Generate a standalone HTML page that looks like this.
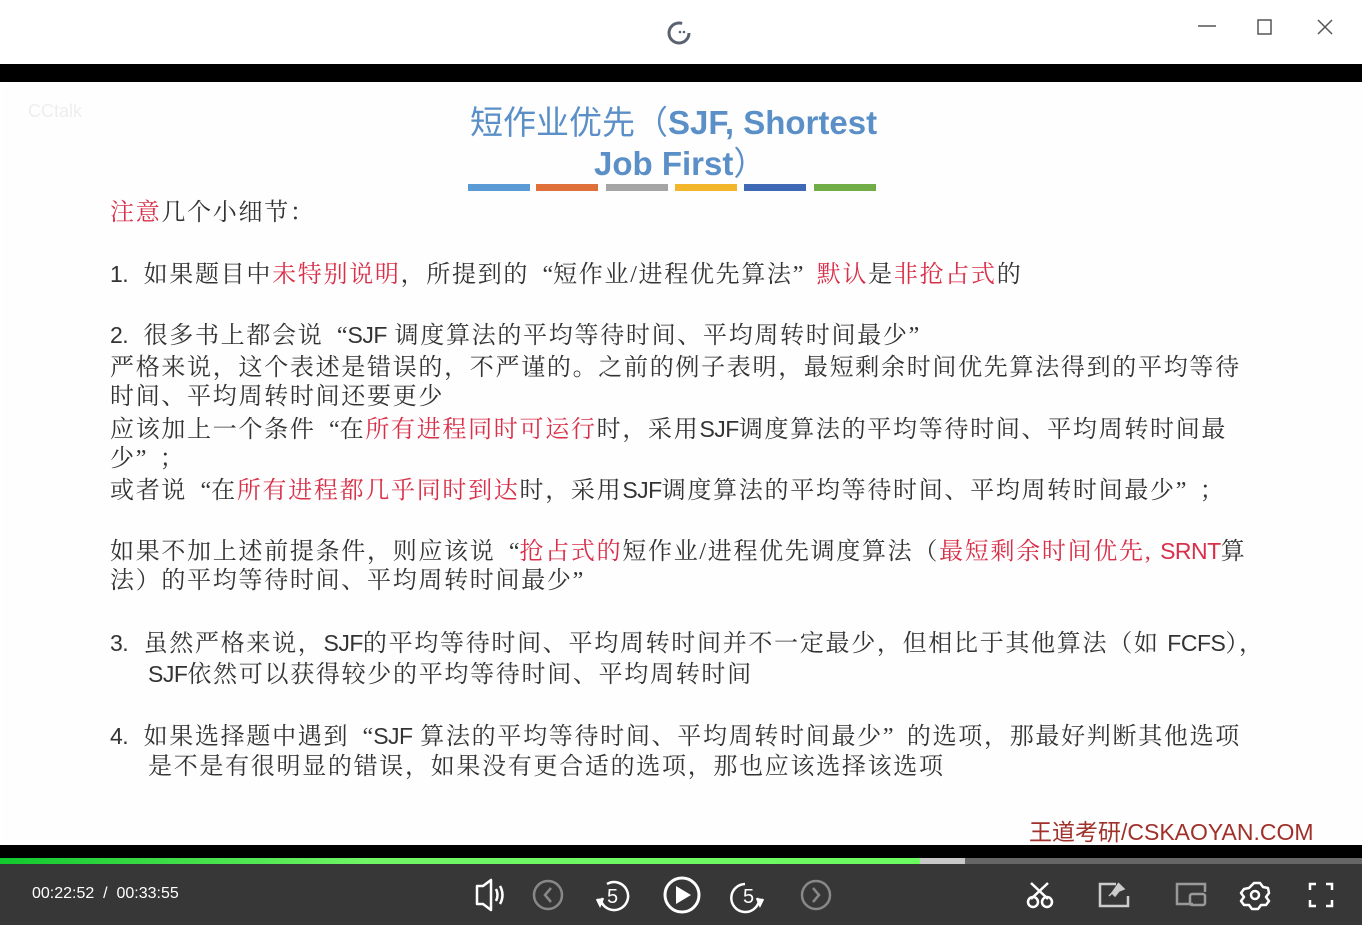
<!DOCTYPE html>
<html><head><meta charset="utf-8"><style>
*{margin:0;padding:0;box-sizing:border-box}
body{width:1362px;height:925px;overflow:hidden;background:#fff;position:relative;font-family:"Liberation Serif","Noto Serif CJK SC",serif}
.tb{position:absolute;left:0;top:0;width:1362px;height:64px;background:#fff}
.blk{position:absolute;left:0;width:1362px;background:#000}
.slide{position:absolute;left:2px;top:82px;width:1360px;height:763px;background:#fefefe}
.l{position:absolute;left:110px;font-size:24px;letter-spacing:1.7px;color:#333;white-space:nowrap;line-height:30px;height:30px}
.l b{font-weight:normal;font-family:"Liberation Sans",sans-serif;letter-spacing:-0.5px;font-size:23px}
.qo{display:inline-block;width:24px;text-align:right;letter-spacing:0}
.qc{display:inline-block;width:24px;text-align:left;letter-spacing:0}
.r{color:#d9304a}
.t{position:absolute;font-family:"Liberation Sans","Noto Sans CJK SC",sans-serif;color:#5b8fc7;font-size:33px;font-weight:bold;white-space:nowrap}
.bar{position:absolute;top:184px;height:7px;width:62px}
.cb{position:absolute;left:0;top:864px;width:1362px;height:61px;background:#373737}
svg.i{position:absolute}
</style></head><body>
<div class="tb"></div>
<svg class="i" style="left:666px;top:20px" width="26" height="26" viewBox="0 0 26 26"><circle cx="13" cy="13" r="10" fill="none" stroke="#5a6270" stroke-width="3" stroke-dasharray="50 13"/><circle cx="14" cy="12" r="1.3" fill="#5a6270"/><circle cx="18" cy="12" r="1.3" fill="#5a6270"/></svg>
<svg class="i" style="left:1196px;top:16px" width="140" height="24"><line x1="2" y1="10" x2="20" y2="10" stroke="#555" stroke-width="1.5"/><rect x="62" y="4" width="13" height="14" fill="none" stroke="#555" stroke-width="1.5"/><path d="M122 4 L136 18 M136 4 L122 18" stroke="#555" stroke-width="1.5"/></svg>
<div class="blk" style="top:64px;height:18px"></div>
<div class="slide"></div>
<div style="position:absolute;left:28px;top:101px;font:18px 'Liberation Sans',sans-serif;color:#eee">CCtalk</div>
<div class="t" style="left:470px;top:96px"><span style="font-weight:normal;font-family:'Noto Sans CJK SC',sans-serif">短作业优先（</span>SJF, Shortest</div>
<div class="t" style="left:594px;top:137px">Job First<span style="font-weight:normal;font-family:'Noto Sans CJK SC',sans-serif">）</span></div>
<div class="bar" style="left:468px;background:#5b9bd5"></div>
<div class="bar" style="left:536px;background:#e0703a"></div>
<div class="bar" style="left:606px;background:#a5a5a5"></div>
<div class="bar" style="left:675px;background:#f3b62b"></div>
<div class="bar" style="left:744px;background:#3f68b5"></div>
<div class="bar" style="left:814px;background:#70ad47"></div>

<div class="l" style="top:198px"><span class="r">注意</span>几个小细节：</div>
<div class="l" style="top:259px"><b>1.</b>&nbsp;&nbsp;如果题目中<span class="r">未特别说明</span>，所提到的<span class="qo">“</span>短作业/进程优先算法<span class="qc">”</span><span class="r">默认</span>是<span class="r">非抢占式</span>的</div>
<div class="l" style="top:320px"><b>2.</b>&nbsp;&nbsp;很多书上都会说<span class="qo">“</span><b>SJF</b> 调度算法的平均等待时间、平均周转时间最少<span class="qc">”</span></div>
<div class="l" style="top:353px">严格来说，这个表述是错误的，不严谨的。之前的例子表明，最短剩余时间优先算法得到的平均等待</div>
<div class="l" style="top:382px">时间、平均周转时间还要更少</div>
<div class="l" style="top:414px">应该加上一个条件<span class="qo">“</span>在<span class="r">所有进程同时可运行</span>时，采用<b>SJF</b>调度算法的平均等待时间、平均周转时间最</div>
<div class="l" style="top:444px">少<span class="qc">”</span>；</div>
<div class="l" style="top:475px">或者说<span class="qo">“</span>在<span class="r">所有进程都几乎同时到达</span>时，采用<b>SJF</b>调度算法的平均等待时间、平均周转时间最少<span class="qc">”</span>；</div>
<div class="l" style="top:536px">如果不加上述前提条件，则应该说<span class="qo">“</span><span class="r">抢占式的</span>短作业/进程优先调度算法（<span class="r">最短剩余时间优先, <b>SRNT</b></span>算</div>
<div class="l" style="top:566px">法）的平均等待时间、平均周转时间最少<span class="qc">”</span></div>
<div class="l" style="top:628px"><b>3.</b>&nbsp;&nbsp;虽然严格来说，<b>SJF</b>的平均等待时间、平均周转时间并不一定最少，但相比于其他算法（如 <b>FCFS</b>），</div>
<div class="l" style="top:659px;left:148px"><b>SJF</b>依然可以获得较少的平均等待时间、平均周转时间</div>
<div class="l" style="top:721px"><b>4.</b>&nbsp;&nbsp;如果选择题中遇到<span class="qo">“</span><b>SJF</b> 算法的平均等待时间、平均周转时间最少<span class="qc">”</span>的选项，那最好判断其他选项</div>
<div class="l" style="top:752px;left:148px">是不是有很明显的错误，如果没有更合适的选项，那也应该选择该选项</div>
<div style="position:absolute;left:1029px;top:813px;font:23px 'Liberation Sans','Noto Sans CJK SC',sans-serif;color:#a0302a;white-space:nowrap">王道考研/CSKAOYAN.COM</div>

<div class="blk" style="top:845px;height:13px"></div>
<div style="position:absolute;left:0;top:858px;width:1362px;height:6px;background:#666"></div>
<div style="position:absolute;left:0;top:858px;width:965px;height:6px;background:#c8c8c8"></div>
<div style="position:absolute;left:0;top:858px;width:920px;height:6px;background:linear-gradient(90deg,#12c72f,#70f565 40%,#6cfb60)"></div>
<div class="cb"></div>
<div style="position:absolute;left:32px;top:885px;font:16px 'Liberation Sans',sans-serif;color:#fff">00:22:52&nbsp;&nbsp;/&nbsp;&nbsp;00:33:55</div>
<svg class="i" style="left:460px;top:870px" width="380" height="50" fill="none" stroke-width="2.5">
<path d="M17 16 h6 l8 -6 v30 l-8 -6 h-6 z" stroke="#fff" stroke-linejoin="round"/><path d="M36 19 q3 6 0 12 M40 16 q5 9 0 18" stroke="#fff"/>
<circle cx="88" cy="25" r="14" stroke="#888"/><path d="M91 18 l-6 7 6 7" stroke="#888"/>
<path d="M141 31 A14 14 0 1 0 147 14" stroke="#fff"/><path d="M143 28 l-3 7 -3 -6" stroke="#fff" fill="#fff"/><text x="147" y="33" fill="#fff" stroke="none" font-family="Liberation Sans" font-size="20">5</text>
<circle cx="222" cy="25" r="17" stroke="#fff" stroke-width="3"/><path d="M216 16 L231 25 L216 34 Z" fill="#fff" stroke="none"/>
<path d="M299 31 A14 14 0 1 1 285 14" stroke="#fff"/><path d="M297 28 l3 7 3 -6" stroke="#fff" fill="#fff"/><text x="283" y="33" fill="#fff" stroke="none" font-family="Liberation Sans" font-size="20">5</text>
<circle cx="356" cy="25" r="14" stroke="#888"/><path d="M353 18 l6 7 -6 7" stroke="#888"/>
</svg>
<svg class="i" style="left:1010px;top:870px" width="352" height="50" fill="none" stroke-width="2.5">
<path d="M21 13 L38 29 M38 13 L21 29" stroke="#fff"/><circle cx="23" cy="32" r="5" stroke="#fff"/><circle cx="37" cy="32" r="5" stroke="#fff"/>
<path d="M106 14 h-16 v22 h28 v-10" stroke="#ccc"/><path d="M108 13 l6 6 -5 2 -4 5 -3 -3 -3 3" fill="#ccc" stroke="#ccc" stroke-width="1.5"/>
<path d="M183 34 h-16 v-20 h28 v8" stroke="#999"/><rect x="180" y="24" width="15" height="11" rx="2" stroke="#999"/>
<path d="M244 13 l6 0 3 4 5 1 1 5 -3 4 3 4 -3 4 -5 0 -3 4 -6 0 -3 -4 -5 0 -3 -4 3 -4 -3 -4 3 -4 5 -1 z" stroke="#fff" stroke-linejoin="round"/><circle cx="245" cy="25" r="4" stroke="#fff"/>
<path d="M300 20 v-6 h6 M316 14 h6 v6 M322 30 v6 h-6 M306 36 h-6 v-6" stroke="#fff"/>
</svg>
</body></html>
